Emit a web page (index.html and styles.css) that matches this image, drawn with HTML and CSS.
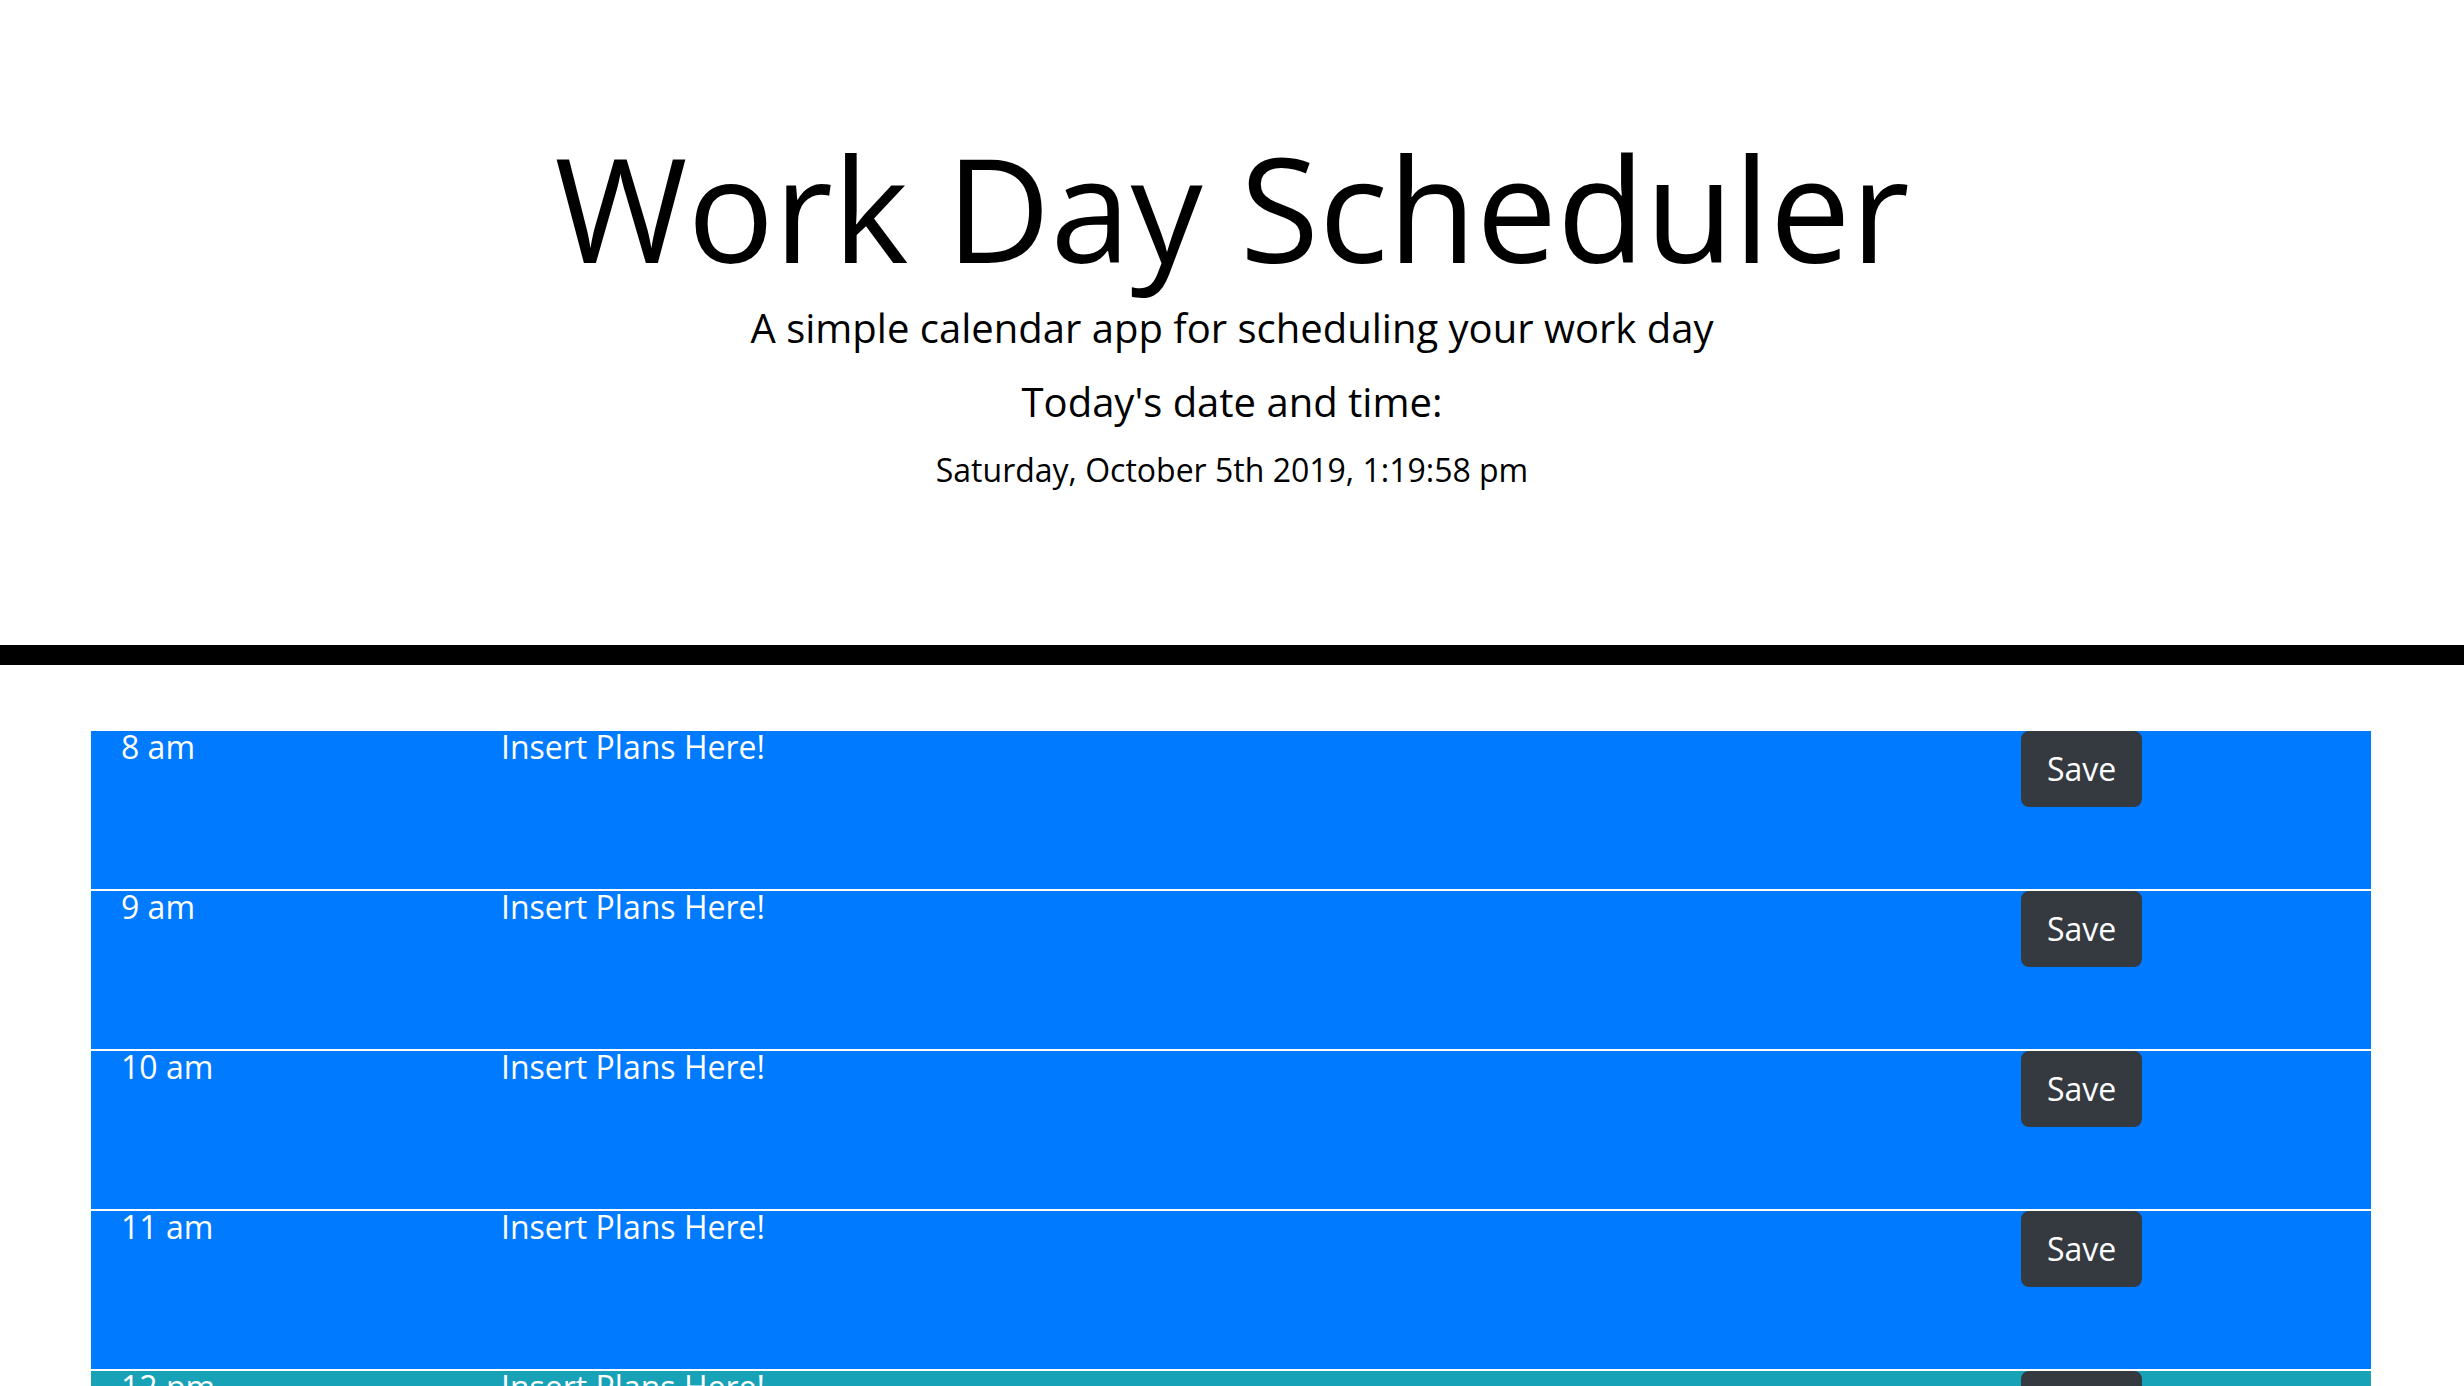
FILE: index.html
```html
<!DOCTYPE html>
<html lang="en">
<head>
<meta charset="utf-8">
<title>Work Day Scheduler</title>
<link rel="stylesheet" href="styles.css">
</head>
<body>
<header class="jumbotron">
  <h1 class="title">Work Day Scheduler</h1>
  <p class="lead">A simple calendar app for scheduling your work day</p>
  <p class="lead today">Today's date and time:</p>
  <p class="current-day">Saturday, October 5th 2019, 1:19:58 pm</p>
</header>
<main class="container">
  <div class="row time-block future">
    <div class="hour">8 am</div>
    <div class="description">Insert Plans Here!</div>
    <div class="save-col"><button class="btn">Save</button></div>
  </div>
  <div class="row time-block future">
    <div class="hour">9 am</div>
    <div class="description">Insert Plans Here!</div>
    <div class="save-col"><button class="btn">Save</button></div>
  </div>
  <div class="row time-block future">
    <div class="hour">10 am</div>
    <div class="description">Insert Plans Here!</div>
    <div class="save-col"><button class="btn">Save</button></div>
  </div>
  <div class="row time-block future">
    <div class="hour">11 am</div>
    <div class="description">Insert Plans Here!</div>
    <div class="save-col"><button class="btn">Save</button></div>
  </div>
  <div class="row time-block present">
    <div class="hour">12 pm</div>
    <div class="description">Insert Plans Here!</div>
    <div class="save-col"><button class="btn">Save</button></div>
  </div>
  <div class="row time-block later">
    <div class="hour">1 pm</div>
    <div class="description">Insert Plans Here!</div>
    <div class="save-col"><button class="btn">Save</button></div>
  </div>
  <div class="row time-block later">
    <div class="hour">2 pm</div>
    <div class="description">Insert Plans Here!</div>
    <div class="save-col"><button class="btn">Save</button></div>
  </div>
  <div class="row time-block later">
    <div class="hour">3 pm</div>
    <div class="description">Insert Plans Here!</div>
    <div class="save-col"><button class="btn">Save</button></div>
  </div>
  <div class="row time-block later">
    <div class="hour">4 pm</div>
    <div class="description">Insert Plans Here!</div>
    <div class="save-col"><button class="btn">Save</button></div>
  </div>
  <div class="row time-block later">
    <div class="hour">5 pm</div>
    <div class="description">Insert Plans Here!</div>
    <div class="save-col"><button class="btn">Save</button></div>
  </div>
</main>
</body>
</html>
```
FILE: styles.css
```css
* { box-sizing: border-box; }
html, body { margin: 0; padding: 0; background: #ffffff; }
body {
  font-family: "Open Sans", "Noto Sans", sans-serif;
  font-size: 32px;
  line-height: 1;
  color: #000000;
}
.jumbotron {
  text-align: center;
  padding: 121px 64px 151px;
  border-bottom: 20px solid #000000;
  margin: 0 0 64px;
}
.title {
  font-size: 144px;
  font-weight: 400;
  line-height: 173px;
  margin: 0 0 10px;
}
.lead {
  font-size: 40px;
  font-weight: 400;
  line-height: 48px;
  margin: 0 0 26px;
}
.lead.today { margin-bottom: 20px; }
.current-day {
  font-size: 32px;
  line-height: 48px;
  margin: 0;
}
.container {
  margin: 0 93px 0 91px;
}
.row {
  display: flex;
  height: 160px;
  border-top: 2px solid #ffffff;
  color: #ffffff;
  font-size: 32px;
  line-height: 1;
}
.future { background: #007bff; }
.present { background: #17a2b8; }
.later { background: #28a745; }
.hour {
  flex: 0 0 16.6667%;
  padding: 0 30px;
}
.description {
  flex: 0 0 66.6667%;
  padding: 0 30px;
}
.save-col {
  flex: 0 0 16.6667%;
  padding: 0 30px;
}
.btn {
  font-family: "Open Sans", "Noto Sans", sans-serif;
  font-size: 32px;
  line-height: 48px;
  padding: 12px 24px;
  border: 2px solid #343a40;
  border-radius: 8px;
  background: #343a40;
  color: #ffffff;
  cursor: pointer;
}
```
